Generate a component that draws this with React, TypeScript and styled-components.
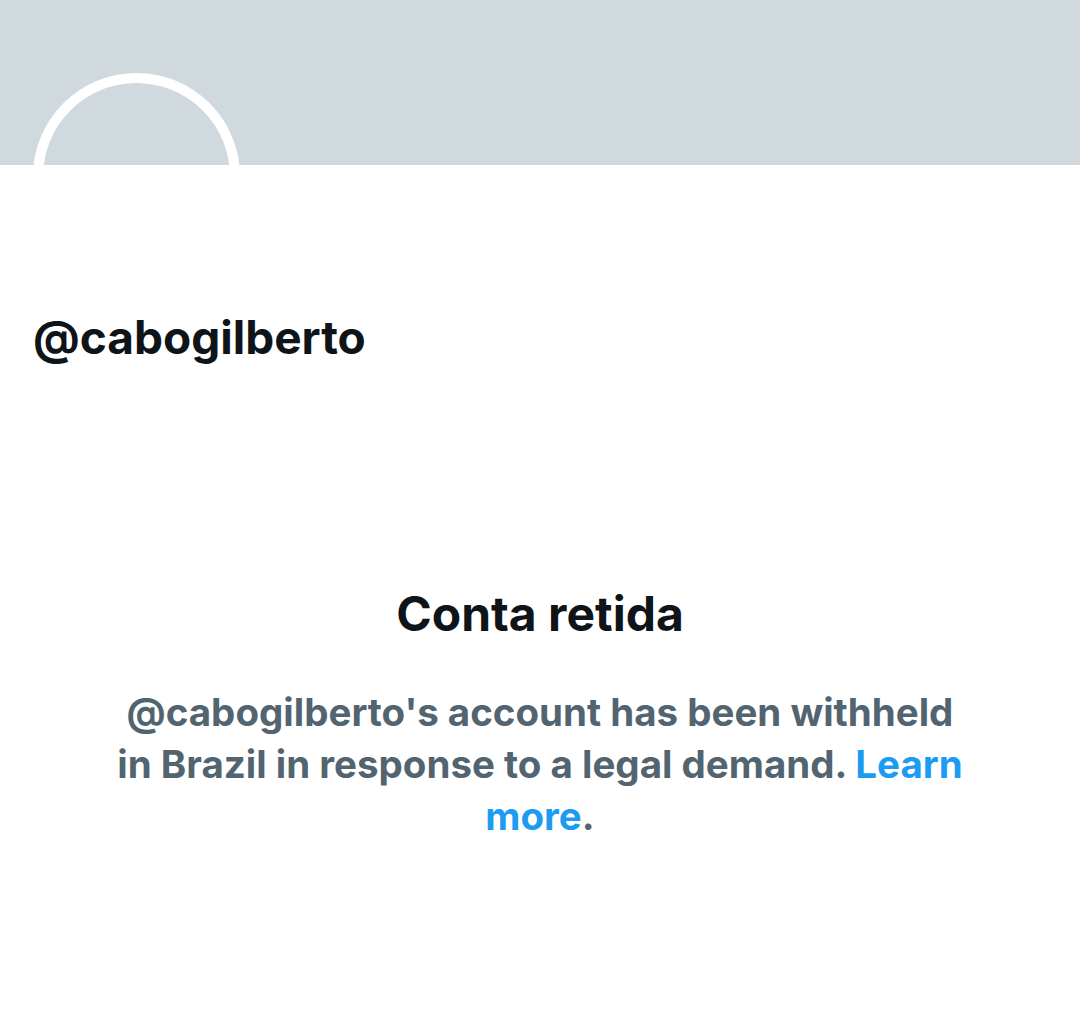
import styled, { createGlobalStyle } from "styled-components";

const Global = createGlobalStyle`
  html, body {
    margin: 0;
    padding: 0;
    background: #fff;
  }
  body {
    font-family: Inter, "Noto Sans", "Liberation Sans", sans-serif;
    -webkit-font-smoothing: antialiased;
  }
`;

const Page = styled.div`
  width: 1080px;
  min-height: 1029px;
  background: #fff;
`;

const Banner = styled.div`
  position: relative;
  height: 165px;
  background: #cfd9de;
  overflow: hidden;
`;

const Avatar = styled.div`
  position: absolute;
  left: 33px;
  top: 73px;
  width: 187px;
  height: 187px;
  border: 10px solid #fff;
  border-radius: 50%;
  background: #cfd9de;
`;

const Handle = styled.h1`
  margin: 0;
  padding: 145px 33px 0;
  font-size: 46px;
  line-height: 54px;
  font-weight: 700;
  color: #0f1419;
`;

const Notice = styled.section`
  display: flex;
  flex-direction: column;
  align-items: center;
  padding: 222px 100px 0;
  text-align: center;
`;

const Title = styled.h2`
  margin: 0;
  font-size: 48px;
  line-height: 56px;
  font-weight: 700;
  color: #0f1419;
`;

const Body = styled.p`
  margin: 44px 0 0;
  max-width: 862px;
  font-size: 38.5px;
  line-height: 52px;
  font-weight: 700;
  color: #536471;
`;

const Link = styled.a`
  color: #1d9bf0;
  text-decoration: none;
`;

export default function App() {
  return (
    <Page>
      <Global />
      <Banner>
        <Avatar />
      </Banner>
      <Handle>@cabogilberto</Handle>
      <Notice>
        <Title>Conta retida</Title>
        <Body>
          @cabogilberto's account has been withheld in Brazil in response to a
          legal demand. <Link href="#">Learn more</Link>.
        </Body>
      </Notice>
    </Page>
  );
}
